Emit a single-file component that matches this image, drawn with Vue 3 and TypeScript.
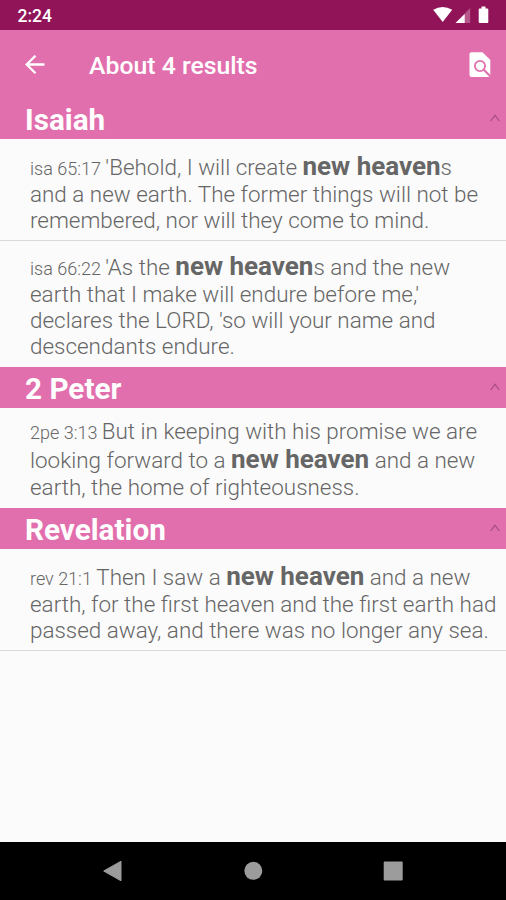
<script setup lang="ts">
interface Part {
  text: string
  kind?: 'ref' | 'hit'
}
interface Line {
  parts: Part[]
}
interface Group {
  book: string
  verses: Line[][]
}

const t = (text: string): Part => ({ text })
const ref = (text: string): Part => ({ text, kind: 'ref' })
const hit = (text: string): Part => ({ text, kind: 'hit' })
const line = (...parts: Part[]): Line => ({ parts })

const groups: Group[] = [
  {
    book: 'Isaiah',
    verses: [
      [
        line(ref('isa 65:17 '), t("'Behold, I will create "), hit('new heaven'), t('s')),
        line(t('and a new earth. The former things will not be')),
        line(t('remembered, nor will they come to mind.')),
      ],
      [
        line(ref('isa 66:22 '), t("'As the "), hit('new heaven'), t('s and the new')),
        line(t("earth that I make will endure before me,'")),
        line(t("declares the LORD, 'so will your name and")),
        line(t('descendants endure.')),
      ],
    ],
  },
  {
    book: '2 Peter',
    verses: [
      [
        line(ref('2pe 3:13 '), t('But in keeping with his promise we are')),
        line(t('looking forward to a '), hit('new heaven'), t(' and a new')),
        line(t('earth, the home of righteousness.')),
      ],
    ],
  },
  {
    book: 'Revelation',
    verses: [
      [
        line(ref('rev 21:1 '), t('Then I saw a '), hit('new heaven'), t(' and a new')),
        line(t('earth, for the first heaven and the first earth had')),
        line(t('passed away, and there was no longer any sea.')),
      ],
    ],
  },
]

const isTall = (l: Line): boolean => l.parts.some((p) => p.kind === 'hit')
</script>

<template>
  <div class="screen">
    <div class="status">
      <span class="clock">2:24</span>
      <svg class="status-icons" width="58" height="18" viewBox="0 0 58 18">
        <path d="M0.200 3.800Q9.700 -1.800 19.200 3.800L9.700 16Z" fill="#fff" />
        <path d="M37.200 2V17H22.500Z" fill="#b8578c" />
        <path d="M31.700 8V17H22.500Z" fill="#fff" />
        <path d="M48.500 0.500h4v2h1.800q1 0 1 1v12.500q0 1-1 1h-7.600q-1 0-1-1v-12.500q0-1 1-1h1.800Z" fill="#fff" />
      </svg>
    </div>
    <header class="appbar">
      <svg class="back" width="20" height="20" viewBox="0 0 20 20">
        <path d="M19.500 9.500H2M10.500 0.700L1.700 9.500L10.500 18.300" fill="none" stroke="#fff" stroke-width="2.300" />
      </svg>
      <h1 class="title">About 4 results</h1>
      <svg class="find" width="22" height="26" viewBox="0 0 22 26">
        <path d="M2.500 0.200H13.500L21.300 8V23Q21.300 25 19.300 25H2.500Q0.500 25 0.500 23V2.200Q0.500 0.200 2.500 0.200Z" fill="#fff" />
        <path d="M14.800 17.800L22 25" stroke="#e26fad" stroke-width="2" />
        <circle cx="11" cy="14" r="5.100" fill="none" stroke="#e26fad" stroke-width="1.800" />
      </svg>
    </header>
    <main class="list">
      <section v-for="g in groups" :key="g.book" class="group">
        <h2 class="book">
          <span>{{ g.book }}</span>
          <svg width="10" height="8" viewBox="0 0 10 8">
            <path d="M0.700 7L5 1.200L9.300 7" fill="none" stroke="#a34c7c" stroke-width="1.200" />
          </svg>
        </h2>
        <div v-for="(v, i) in g.verses" :key="i" class="verse">
          <div v-for="(l, j) in v" :key="j" class="line" :class="{ tall: isTall(l) }"><span v-for="(p, k) in l.parts" :key="k" :class="p.kind">{{ p.text }}</span></div>
        </div>
      </section>
    </main>
    <nav class="navbar">
      <svg width="20" height="22" viewBox="0 0 20 22"><path d="M0.700 11L18 1.200V20.800Z" fill="#9c9c9c" stroke="#9c9c9c" stroke-linejoin="round" /></svg>
      <svg width="20" height="22" viewBox="0 0 20 22"><circle cx="10.300" cy="10.800" r="9" fill="#9c9c9c" /></svg>
      <svg width="20" height="22" viewBox="0 0 20 22"><rect x="0.700" y="1.500" width="19" height="19" rx="1" fill="#9c9c9c" /></svg>
    </nav>
  </div>
</template>

<style>
body {
  margin: 0;
}
</style>

<style scoped>
.screen {
  width: 506px;
  height: 900px;
  display: flex;
  flex-direction: column;
  overflow: hidden;
  background: #fbfbfb;
  font-family: Roboto, sans-serif;
}
.status {
  height: 30px;
  flex: none;
  box-sizing: border-box;
  padding: 0 16px 0 17.5px;
  display: flex;
  align-items: center;
  justify-content: space-between;
  background: #911459;
}
.clock {
  color: #fff;
  font-size: 17.5px;
  font-weight: 500;
  line-height: 30px;
  padding-top: 2px;
}
.status-icons {
  margin-right: -1px;
}
.appbar {
  height: 70px;
  flex: none;
  box-sizing: border-box;
  padding: 0 15px 0 25px;
  display: flex;
  align-items: center;
  background: #e26fad;
}
.title {
  flex: 1;
  margin: 1px 0 0 44px;
  color: #fff;
  font-size: 24.8px;
  font-weight: 500;
  line-height: 30px;
}
.list {
  flex: 1;
}
.book {
  height: 41px;
  box-sizing: border-box;
  margin: 0;
  padding: 3px 6px 0 25px;
  display: flex;
  align-items: center;
  justify-content: space-between;
  background: #e26fad;
  color: #fff;
  font-size: 29.7px;
  font-weight: 700;
  line-height: 36px;
}
.book svg {
  margin-top: -4px;
}
.group:first-child .book {
  height: 39px;
  padding-top: 1px;
}
.verse {
  padding: 12px 0 7px 30px;
  border-bottom: 1px solid #d9d9d9;
  color: #666;
}
.group:first-child .verse:last-child {
  padding-top: 10px;
  padding-bottom: 8px;
  border-bottom: 0;
}
.group:nth-child(2) .verse {
  padding-top: 10px;
  padding-bottom: 8px;
  border-bottom: 0;
}
.group:last-child .verse {
  padding-top: 12px;
}
.line {
  height: 26px;
  font-size: 22.45px;
  font-weight: 300;
  line-height: 26px;
  white-space: pre;
}
.tall {
  height: 30px;
  line-height: 32px;
}
.ref {
  font-size: 18px;
}
.hit {
  font-size: 26px;
  font-weight: 700;
  line-height: 0;
}
.navbar {
  height: 58px;
  flex: none;
  box-sizing: border-box;
  padding: 0 103px;
  display: flex;
  align-items: center;
  justify-content: space-between;
  background: #000;
}
</style>
